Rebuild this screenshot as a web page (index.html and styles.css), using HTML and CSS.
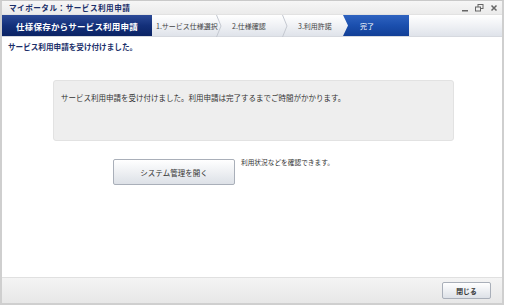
FILE: index.html
```html
<!DOCTYPE html>
<html lang="ja">
<head>
<meta charset="utf-8">
<link rel="stylesheet" href="styles.css">
</head>
<body>
<div class="window">
  <div class="titlebar">
    <span class="title">マイポータル：サービス利用申請</span>
    <div class="controls">
      <svg width="8" height="8" viewBox="0 0 8 8"><rect x="1" y="6" width="6" height="1.5" fill="#666"/></svg>
      <svg width="9" height="8" viewBox="0 0 9 8"><rect x="3" y="0.5" width="5" height="4" fill="none" stroke="#666" stroke-width="1"/><rect x="0.5" y="3" width="5" height="4" fill="#eee" stroke="#666" stroke-width="1"/></svg>
      <svg width="8" height="8" viewBox="0 0 8 8"><path d="M1.5 1.5 L6.5 6.5 M6.5 1.5 L1.5 6.5" stroke="#666" stroke-width="1.5"/></svg>
    </div>
  </div>
  <div class="stepbar">
    <div class="brand">仕様保存からサービス利用申請</div>
    <div class="step s1">1.サービス仕様選択</div>
    <svg class="chev" width="6" height="22" viewBox="0 0 6 22"><path d="M0.5 0 L5 11 L0.5 22" fill="none" stroke="#c4c8d0" stroke-width="1"/></svg>
    <div class="step s2">2.仕様確認</div>
    <svg class="chev" width="6" height="22" viewBox="0 0 6 22"><path d="M0.5 0 L5 11 L0.5 22" fill="none" stroke="#c4c8d0" stroke-width="1"/></svg>
    <div class="step s3">3.利用許諾</div>
    <div class="done">完了</div>
  </div>
  <div class="content">
    <div class="headline">サービス利用申請を受け付けました。</div>
    <div class="notice">サービス利用申請を受け付けました。利用申請は完了するまでご時間がかかります。</div>
    <div class="action">
      <button class="btn big">システム管理を開く</button>
      <span class="hint">利用状況などを確認できます。</span>
    </div>
  </div>
  <div class="footer">
    <button class="btn close">閉じる</button>
  </div>
</div>
</body>
</html>
```

FILE: styles.css
```css
* { box-sizing: border-box; }
html, body { margin: 0; padding: 0; background: #ffffff; }
body {
  font-family: "Noto Sans CJK JP", "Noto Sans", sans-serif;
  font-size: 8px;
  color: #222;
  width: 506px;
  height: 307px;
  overflow: hidden;
}
.window {
  width: 504px;
  height: 305px;
  border: 1px solid #c9c9c9;
  border-left: 2px solid #cfcfcf;
  border-right: 2px solid #cfcfcf;
  border-bottom: 2px solid #cfcfcf;
  display: flex;
  flex-direction: column;
  background: #fff;
}
.titlebar {
  height: 14px;
  display: flex;
  align-items: center;
  justify-content: space-between;
  padding: 0 4px 0 7px;
  background: linear-gradient(#f6f6f6, #ebebeb);
  border-bottom: 1px solid #e2e2e2;
}
.title {
  font-size: 7.6px;
  font-weight: bold;
  color: #1b2f6a;
  letter-spacing: 0.5px;
}
.controls { display: flex; gap: 6px; align-items: center; }
.controls svg { display: block; }
.stepbar {
  height: 22px;
  display: flex;
  align-items: stretch;
  background: linear-gradient(#ffffff, #eef0f4 55%, #dfe3ea);
  border-bottom: 1px solid #d6d9df;
}
.brand {
  width: 150px;
  display: flex;
  align-items: center;
  justify-content: center;
  color: #fff;
  font-weight: bold;
  font-size: 8.5px;
  letter-spacing: 0.2px;
  background: linear-gradient(#2c4a97, #13307a 50%, #0b2364);
}
.step {
  display: flex;
  align-items: center;
  color: #444;
  font-size: 7px;
  white-space: nowrap;
}
.s1 { padding-left: 4px; width: 64px; }
.s2 { padding-left: 10px; width: 60px; }
.s3 { padding-left: 10px; width: 57px; }
.chev { display: block; flex: none; }
.done {
  width: 66px;
  margin-left: -2px;
  display: flex;
  align-items: center;
  padding-left: 17px;
  color: #fff;
  font-size: 7px;
  background: linear-gradient(#2f63c0, #1b4fae 50%, #123f96);
  clip-path: polygon(0 0, 100% 0, 100% 100%, 0 100%, 5px 50%);
}
.content {
  flex: 1;
  display: flex;
  flex-direction: column;
  padding: 4px 0 0 6px;
}
.headline {
  font-weight: bold;
  color: #1b2f6a;
  font-size: 7.6px;
  line-height: 11px;
}
.notice {
  margin: 28px 0 0 45px;
  width: 401px;
  height: 61px;
  background: #eeeeee;
  border: 1px solid #e2e2e2;
  border-radius: 3px;
  padding: 11px 0 0 7px;
  font-size: 7.5px;
  color: #333;
  line-height: 11px;
}
.action {
  display: flex;
  align-items: flex-start;
  margin: 18px 0 0 105px;
  gap: 6px;
}
.btn {
  font-family: "Noto Sans CJK JP", "Noto Sans", sans-serif;
  color: #333;
  background: linear-gradient(#ffffff, #eef0f3 50%, #dde1e7);
  border: 1px solid #a9afb9;
  border-radius: 2px;
  padding: 0;
  cursor: pointer;
}
.big {
  width: 122px;
  height: 26px;
  font-size: 7.5px;
}
.hint {
  font-size: 6.7px;
  line-height: 11px;
  margin-top: -2px;
  color: #333;
}
.footer {
  height: 26px;
  display: flex;
  justify-content: flex-end;
  align-items: center;
  padding-right: 11px;
  background: linear-gradient(#f4f4f4, #e7e7e7);
  border-top: 1px solid #e0e0e0;
}
.close {
  width: 49px;
  height: 17px;
  font-size: 6.8px;
  font-weight: bold;
}
```
